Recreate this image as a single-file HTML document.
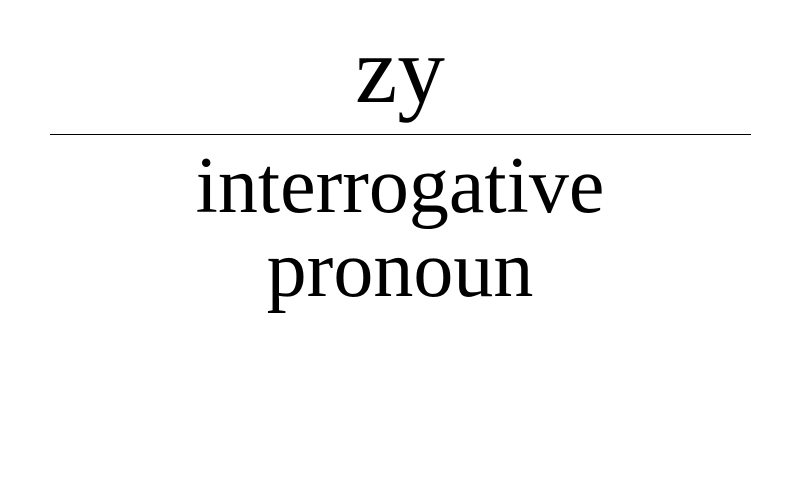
<!DOCTYPE html>
<html><head><meta charset="utf-8"><style>
html,body{margin:0;padding:0;background:#fff;width:800px;height:500px;overflow:hidden;}
.t{position:absolute;left:0;width:800px;text-align:center;font-family:"Liberation Serif",serif;color:#000;line-height:1;white-space:nowrap;}
.line{position:absolute;left:50px;top:134px;width:701px;height:1px;background:#000;}
</style></head><body>
<div class="t" style="top:23px;font-size:95px;">zy</div>
<div class="line"></div>
<div class="t" style="top:146px;font-size:80px;">interrogative</div>
<div class="t" style="top:230px;font-size:80px;">pronoun</div>
</body></html>
